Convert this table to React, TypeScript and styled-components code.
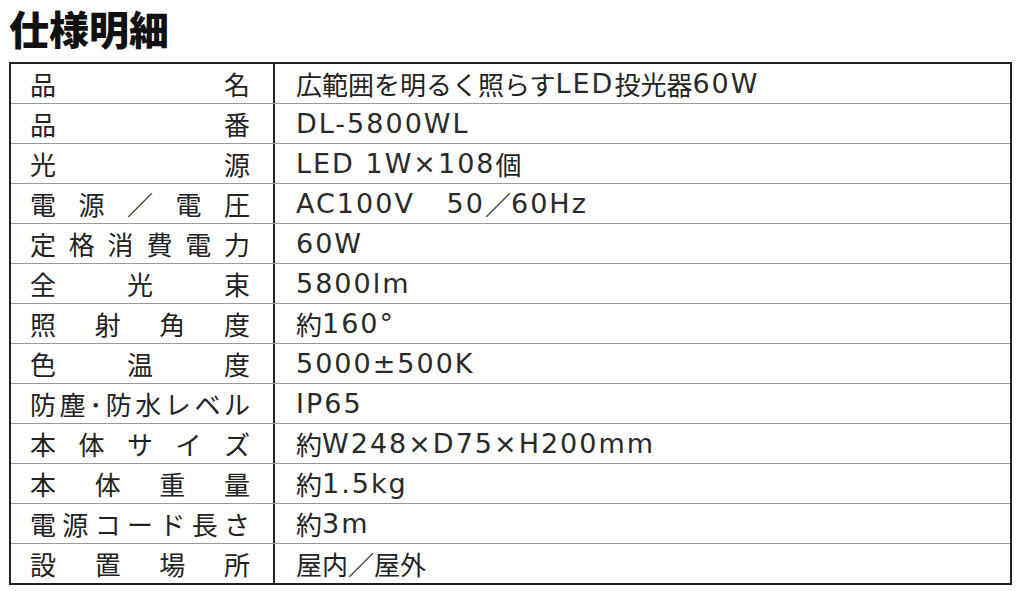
import styled, { createGlobalStyle } from 'styled-components';

const GlobalStyle = createGlobalStyle`
  html, body {
    margin: 0;
    padding: 0;
    background: #fff;
  }
  body {
    font-family: 'Noto Sans CJK JP', 'Noto Sans', sans-serif;
    color: #222;
  }
`;

const Page = styled.div`
  width: 1024px;
  height: 591px;
  padding: 6px 12px 0 9px;
  box-sizing: border-box;
`;

const Title = styled.h1`
  margin: 0;
  height: 56px;
  font-size: 40px;
  line-height: 44px;
  font-weight: 900;
  color: #111;
`;

const Table = styled.div`
  border: 2px solid #222;
  width: 1003px;
  box-sizing: border-box;
`;

const Row = styled.div<{ last?: boolean }>`
  display: grid;
  grid-template-columns: 264px 1fr;
  height: ${(p) => (p.last ? 39 : 40)}px;
  box-sizing: border-box;
  border-bottom: ${(p) => (p.last ? 'none' : '1px solid #9a9a9a')};
`;

const Label = styled.div`
  display: flex;
  justify-content: space-between;
  align-items: center;
  padding: 0 23px 0 19px;
  border-right: 2px solid #222;
  font-size: 26px;
  color: #222;
`;

const Value = styled.div`
  display: flex;
  align-items: center;
  padding-left: 21px;
  font-size: 26px;
  color: #222;
  white-space: pre;
`;

// wide geometric-looking latin run, spaced out a bit like the original typeface
const Latin = styled.span`
  font-family: 'DejaVu Sans', 'Noto Sans CJK JP', sans-serif;
  font-size: 27px;
  letter-spacing: 2px;
  color: #2a2a2a;
`;

const specs: [string, string][] = [
  ['品名', '広範囲を明るく照らすLED投光器60W'],
  ['品番', 'DL-5800WL'],
  ['光源', 'LED 1W×108個'],
  ['電源／電圧', 'AC100V   50／60Hz'],
  ['定格消費電力', '60W'],
  ['全光束', '5800lm'],
  ['照射角度', '約160°'],
  ['色温度', '5000±500K'],
  ['防塵･防水レベル', 'IP65'],
  ['本体サイズ', '約W248×D75×H200mm'],
  ['本体重量', '約1.5kg'],
  ['電源コード長さ', '約3m'],
  ['設置場所', '屋内／屋外'],
];

const latinRun = /^[\x20-\x7E±°×]+$/;

const renderValue = (text: string) =>
  text.split(/([\x20-\x7E±°×]+)/).filter(Boolean).map((part, i) =>
    latinRun.test(part) ? <Latin key={i}>{part}</Latin> : <span key={i}>{part}</span>,
  );

export default function App() {
  return (
    <>
      <GlobalStyle />
      <Page>
        <Title>仕様明細</Title>
        <Table>
          {specs.map(([label, value], i) => (
            <Row key={i} last={i === specs.length - 1}>
              <Label>
                {Array.from(label).map((c, j) => (
                  <span key={j}>{c}</span>
                ))}
              </Label>
              <Value>{renderValue(value)}</Value>
            </Row>
          ))}
        </Table>
      </Page>
    </>
  );
}
